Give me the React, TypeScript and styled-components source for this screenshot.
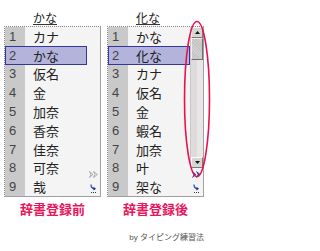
import React from "react";
import styled, {createGlobalStyle} from "styled-components";

const GlobalStyle = createGlobalStyle`
  body {
    margin: 0;
    background: #ffffff;
    font-family: "Noto Sans CJK JP", sans-serif;
  }
`;

const COLORS = {
  numBg: "#c9c9c9",
  listBg: "#f4f4f4",
  selBg: "#b3b3dc",
  selBorder: "#35359c",
  red: "#e8175d",
  text: "#222222",
};

const Page = styled.div`
  width: 220px;
  height: 251px;
  box-sizing: border-box;
  padding-left: 4px;
  display: flex;
  flex-direction: column;
`;

const Columns = styled.div`
  display: flex;
  gap: 6px;
`;

const Column = styled.div`
  width: 97px;
  display: flex;
  flex-direction: column;
`;

const Header = styled.div`
  height: 26px;
  box-sizing: border-box;
  padding: 0 0 1px 29px;
  display: flex;
  align-items: flex-end;
`;

const HeaderText = styled.span`
  font-size: 12px;
  line-height: 13px;
  color: ${COLORS.text};
  border-bottom: 1px solid #333;
`;

const PanelWrap = styled.div`
  position: relative;
`;

const Panel = styled.div`
  display: flex;
  border-top: 1px dotted #8a8a8a;
  border-left: 1px dotted #8a8a8a;
  border-right: 1px solid #a0a0a0;
  border-bottom: 1px solid #a0a0a0;
  background: ${COLORS.listBg};
`;

const List = styled.div`
  width: 82px;
  height: 169px;
  display: grid;
  grid-template-rows: repeat(9, 1fr);
`;

const Row = styled.div<{ $selected?: boolean }>`
  display: flex;
  align-items: center;
  background: ${p => p.$selected ? COLORS.selBg : "transparent"};
  outline: ${p => p.$selected ? `1px solid ${COLORS.selBorder}` : "none"};
  outline-offset: -1px;
`;

const NumCell = styled.div<{ $selected?: boolean }>`
  width: 20px;
  height: 100%;
  box-sizing: border-box;
  padding-left: 4px;
  display: flex;
  align-items: center;
  background: ${p => p.$selected ? "transparent" : COLORS.numBg};
  font-family: "Liberation Sans", Arial, sans-serif;
  font-size: 13px;
  color: #444;
`;

const TextCell = styled.div`
  padding-left: 8px;
  font-size: 13px;
  line-height: 15px;
  color: ${COLORS.text};
  white-space: nowrap;
`;

const Strip = styled.div`
  width: 13px;
  display: flex;
  flex-direction: column;
  justify-content: flex-end;
`;

const Scrollbar = styled.div`
  height: 141px;
  display: flex;
  flex-direction: column;
  background: #e6e4e4;
  border-left: 1px solid #c8c8c8;
  box-sizing: border-box;
`;

const ScrollButton = styled.div`
  height: 11px;
  box-sizing: border-box;
  background: #d8d6d2;
  border-top: 1px solid #fafafa;
  border-left: 1px solid #fafafa;
  border-right: 1px solid #7a7a7a;
  border-bottom: 1px solid #7a7a7a;
  display: flex;
  align-items: center;
  justify-content: center;
`;

const Thumb = styled.div`
  height: 22px;
  box-sizing: border-box;
  background: repeating-linear-gradient(45deg, #c4c4c4 0 1px, #d2d2d2 1px 2px);
  border-top: 1px solid #eeeeee;
  border-left: 1px solid #eeeeee;
  border-right: 1px solid #6e6e6e;
  border-bottom: 1px solid #6e6e6e;
`;

const Track = styled.div`
  flex: 1;
  background: linear-gradient(to right, #dddbdb 0 6px, #e8e6e6 6px);
`;

const IconCell = styled.div<{ $h: number }>`
  height: ${p => p.$h}px;
  display: flex;
  align-items: center;
  justify-content: center;
`;

const Caption = styled.div`
  margin-top: 4px;
  text-align: center;
  font-size: 13px;
  line-height: 16px;
  font-weight: 700;
  color: ${COLORS.red};
`;

const Footer = styled.div`
  margin-top: 15px;
  padding-right: 16px;
  display: flex;
  justify-content: flex-end;
  align-items: baseline;
  font-size: 8px;
  line-height: 10px;
  color: #555;
  white-space: pre;
`;

const FooterBy = styled.span`
  font-family: "Liberation Sans", Arial, sans-serif;
`;

const Ellipse = styled.svg`
  position: absolute;
  left: 76px;
  top: -6px;
  overflow: visible;
  pointer-events: none;
`;

const Triangle: React.FC<{ down?: boolean }> = ({down}) => (
  <svg width="5" height="3" viewBox="0 0 5 3">
    <path d={down ? "M0 0H5L2.5 3Z" : "M0 3H5L2.5 0Z"} fill="#111"/>
  </svg>
);

const Chevrons: React.FC<{ active?: boolean }> = ({active}) => (
  <svg width="10" height="7" viewBox="0 0 10 7">
    {active ? (
      <g fill="#2d4fc4" stroke="#1a2c80" strokeWidth="0.5">
        <path d="M0.5 0.5L4 3.5L0.5 6.5L2 3.5Z"/>
        <path d="M4.5 0.5L8.5 3.5L4.5 6.5L6 3.5Z"/>
      </g>
    ) : (
      <g fill="none" stroke="#9a9a9a" strokeWidth="0.8">
        <path d="M0.5 0.5L4 3.5L0.5 6.5L2 3.5Z"/>
        <path d="M4.5 0.5L8.5 3.5L4.5 6.5L6 3.5Z"/>
      </g>
    )}
  </svg>
);

const EnterIcon: React.FC = () => (
  <svg width="7" height="9" viewBox="0 0 7 9">
    <path d="M1 0.5C1 3.5 2 4.5 4.5 4.8" fill="none" stroke="#2d4fc4" strokeWidth="1.3"/>
    <path d="M3.5 2.8L6 4.8L3.5 6.6Z" fill="#1a2c80"/>
    <path d="M1 8.5H2M3 8.5H4M5 8.5H6" stroke="#333" strokeWidth="1"/>
  </svg>
);

type Candidate = { header: string; items: string[]; scroll?: boolean; caption: string };

const candidates: Candidate[] = [
  {
    header: "かな",
    items: ["カナ", "かな", "仮名", "金", "加奈", "香奈", "佳奈", "可奈", "哉"],
    caption: "辞書登録前",
  },
  {
    header: "化な",
    items: ["かな", "化な", "カナ", "仮名", "金", "蝦名", "加奈", "叶", "架な"],
    scroll: true,
    caption: "辞書登録後",
  },
];

const CandidateWindow: React.FC<{ data: Candidate }> = ({data}) => (
  <Column>
    <Header>
      <HeaderText>{data.header}</HeaderText>
    </Header>
    <PanelWrap>
      <Panel>
        <List>
          {data.items.map((item, i) => (
            <Row key={i} $selected={i === 1}>
              <NumCell $selected={i === 1}>{i + 1}</NumCell>
              <TextCell>{item}</TextCell>
            </Row>
          ))}
        </List>
        <Strip>
          {data.scroll && (
            <Scrollbar>
              <ScrollButton><Triangle/></ScrollButton>
              <Thumb/>
              <Track/>
              <ScrollButton><Triangle down/></ScrollButton>
            </Scrollbar>
          )}
          <IconCell $h={12}><Chevrons active={data.scroll}/></IconCell>
          <IconCell $h={16}><EnterIcon/></IconCell>
        </Strip>
      </Panel>
      {data.scroll && (
        <Ellipse width="28" height="158" viewBox="0 0 28 158">
          <ellipse cx="14" cy="79" rx="12.5" ry="77.5" fill="none" stroke="#e8104f" strokeWidth="1.6"/>
        </Ellipse>
      )}
    </PanelWrap>
    <Caption>{data.caption}</Caption>
  </Column>
);

export default function App() {
  return (
    <Page>
      <GlobalStyle/>
      <Columns>
        {candidates.map(c => <CandidateWindow key={c.header} data={c}/>)}
      </Columns>
      <Footer><FooterBy>by </FooterBy>タイピング練習法</Footer>
    </Page>
  );
}
